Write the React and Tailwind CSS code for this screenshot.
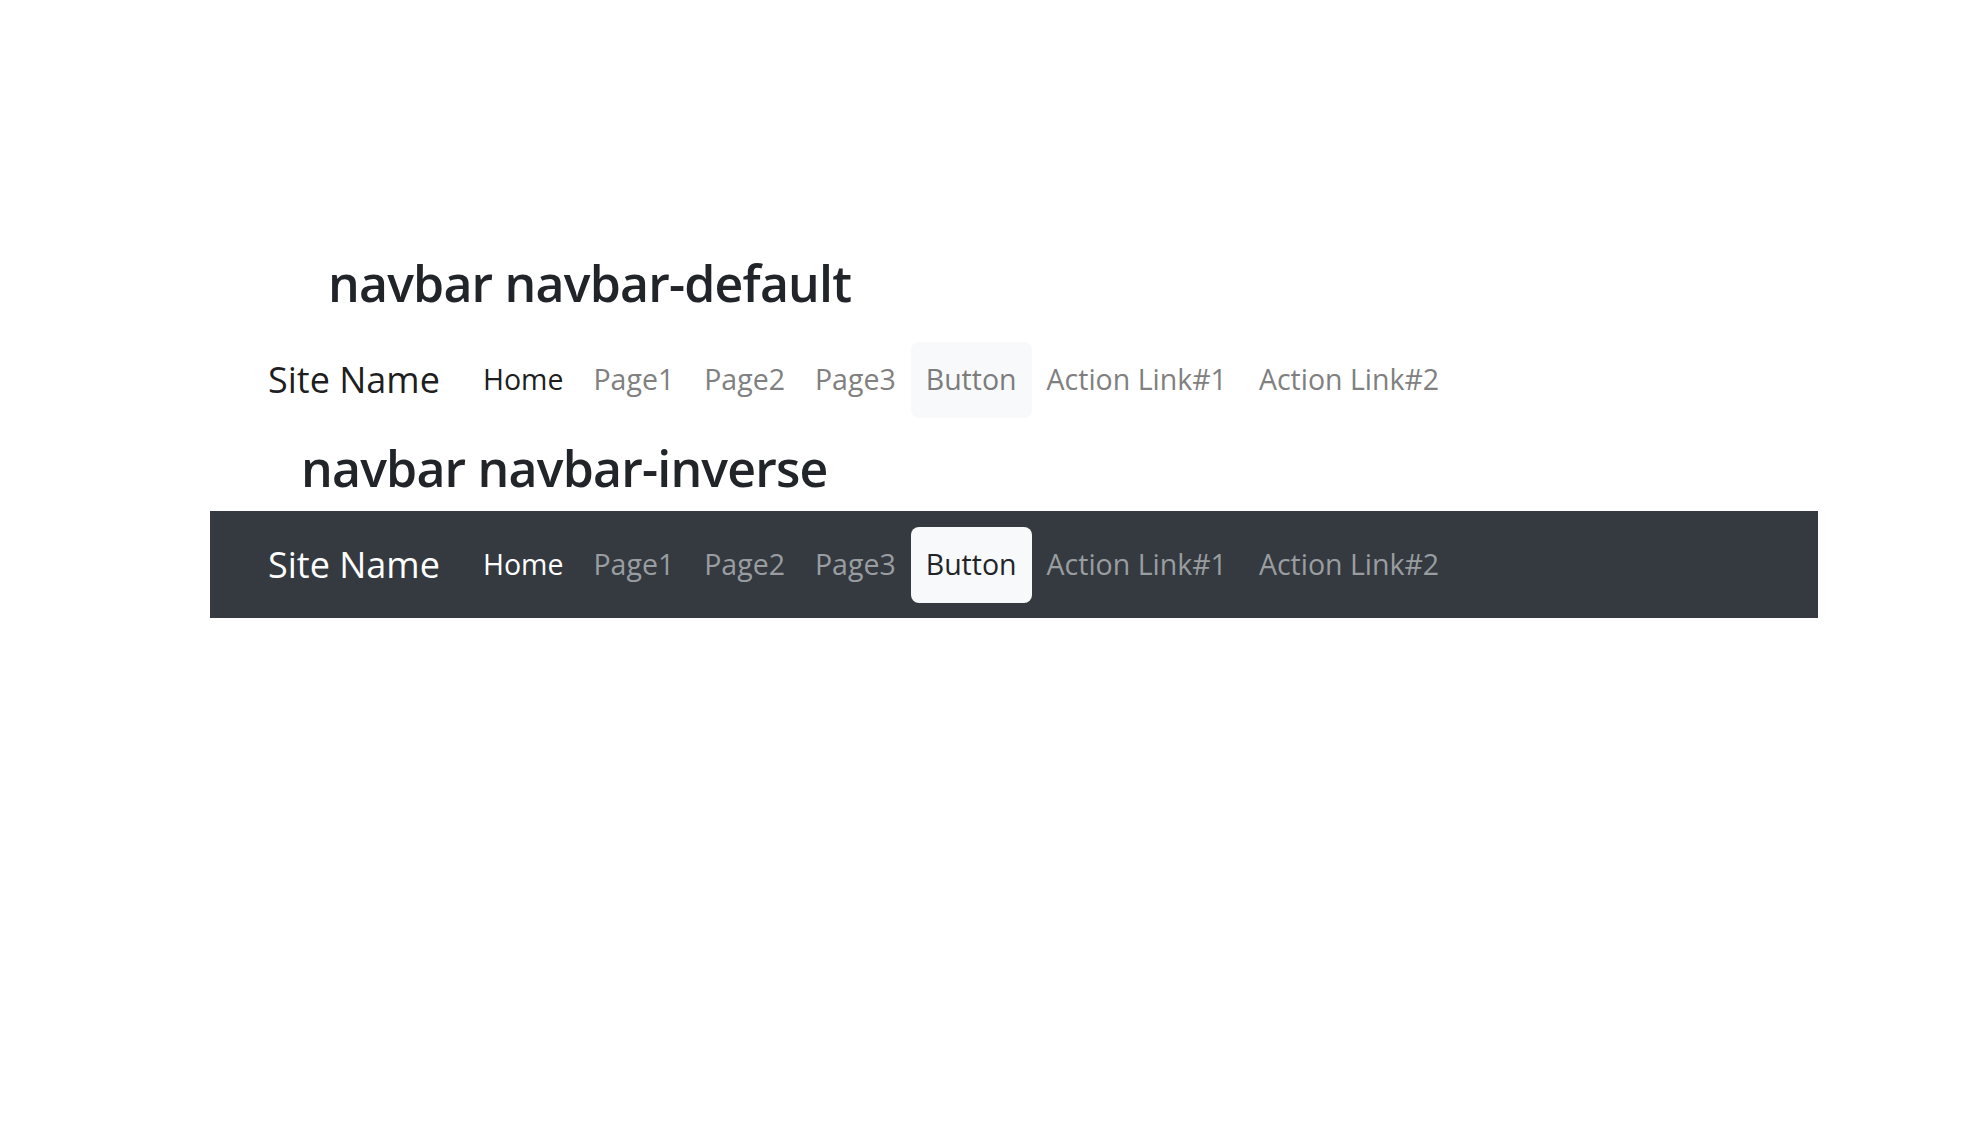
const links = ['Page1', 'Page2', 'Page3'];

const Navbar = ({ dark }) => {
    const brand = dark ? 'text-white' : 'text-black/90';
    const active = dark ? 'text-white' : 'text-black/90';
    const muted = dark ? 'text-[#9a9da0]' : 'text-[#808080]';
    const btnText = dark ? 'text-[#212529]' : 'text-[#7c7c7d]';
    return (
        <nav className={`flex items-center h-[107px] pl-[58px] ${dark ? 'bg-[#343a40]' : ''}`}>
            <a className={`text-[36px] leading-[1.5] mr-[28px] ${brand}`}>Site Name</a>
            <ul className="flex items-center text-[28.5px] leading-[1.5]">
                <li className={`px-[15px] ${active}`}>Home</li>
                {links.map((item) => (
                    <li key={item} className={`px-[15px] ${muted}`}>{item}</li>
                ))}
                <li>
                    <button className={`h-[76px] px-[15px] rounded-[8px] bg-[#f8f9fa] ${btnText}`}>Button</button>
                </li>
                <li className={`pl-[15px] pr-[17px] ${muted}`}>Action Link#1</li>
                <li className={`px-[15px] ${muted}`}>Action Link#2</li>
            </ul>
        </nav>
    );
};

export default function App() {
    return (
        <div className="min-h-screen bg-white pt-[253px] font-['Open_Sans',sans-serif]">
            <div className="ml-[210px] w-[1608px]">
                <h3 className="ml-[118px] mb-[13px] text-[50px] leading-[1.2] font-semibold tracking-[-0.8px] text-[#212529]">
                    navbar navbar-default
                </h3>
                <Navbar />
                <h3 className="ml-[91px] mt-[5px] mb-[13px] text-[50px] leading-[1.2] font-semibold tracking-[-0.8px] text-[#212529]">
                    navbar navbar-inverse
                </h3>
                <Navbar dark />
            </div>
        </div>
    );
}
